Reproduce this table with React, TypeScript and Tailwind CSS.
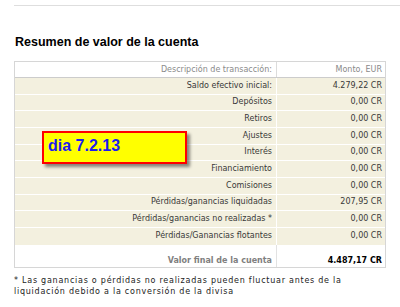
const rows: [string, string][] = [
  ["Saldo efectivo inicial:", "4.279,22 CR"],
  ["Depósitos", "0,00 CR"],
  ["Retiros", "0,00 CR"],
  ["Ajustes", "0,00 CR"],
  ["Interés", "0,00 CR"],
  ["Financiamiento", "0,00 CR"],
  ["Comisiones", "0,00 CR"],
  ["Pérdidas/ganancias liquidadas", "207,95 CR"],
  ["Pérdidas/ganancias no realizadas *", "0,00 CR"],
  ["Pérdidas/Ganancias flotantes", "0,00 CR"],
]

const App = () => {
  return (
    <div className="relative w-[400px] h-[307px] bg-white overflow-hidden">
      <div className="ml-[14px] mt-[5px] h-px bg-[#dedede]" />

      <h2 className="ml-[15px] mt-[29px] text-[12.5px] leading-[15px] font-bold text-black font-['Liberation_Sans',Arial,sans-serif]">
        Resumen de valor de la cuenta
      </h2>

      <div className="ml-[14px] mt-[11px] w-[372px] border border-[#d6d6d6] text-[8px] text-[#383838] font-['DejaVu_Sans',Verdana,sans-serif]">
        <div className="flex h-[16px] items-center border-b border-[#cccccc] text-[#8a8a8a] leading-[10px]">
          <div className="w-[261px] pr-[4px] text-right">Descripción de transacción:</div>
          <div className="flex-1 self-stretch flex items-center justify-end border-l border-[#dcdcdc] pr-[3px]">Monto, EUR</div>
        </div>

        <div className="flex flex-col divide-y divide-white bg-[#f3f0df]">
          {rows.map(([label, amount], idx) => (
            <div key={idx} className="flex h-[16.67px] items-center leading-[10px]">
              <div className="w-[261px] pr-[4px] text-right">{label}</div>
              <div className="flex-1 self-stretch flex items-center justify-end border-l border-white pr-[3px]">{amount}</div>
            </div>
          ))}
        </div>

        <div className="flex h-[22px] font-bold leading-[12px]">
          <div className="w-[261px] pr-[4px] pt-[10px] text-right text-[#808080]">Valor final de la cuenta</div>
          <div className="flex-1 border-l border-[#e2e2e2] pr-[3px] pt-[10px] text-right text-black">4.487,17 CR</div>
        </div>
      </div>

      <p className="ml-[14px] mt-[7px] text-[8px] leading-[11px] tracking-[0.75px] text-[#222] font-['DejaVu_Sans',Verdana,sans-serif]">
        * Las ganancias o pérdidas no realizadas pueden fluctuar antes de la
        <br />
        liquidación debido a la conversión de la divisa
      </p>

      <div className="absolute left-[42px] top-[131px] w-[145px] h-[33px] border-2 border-[#ff0000] bg-[#ffff00] pl-[4px] pt-[4px] shadow-[3px_3px_3px_rgba(0,0,0,0.45)]">
        <span className="block text-[16px] leading-[18px] font-bold text-[#1c1cf0] font-['Liberation_Sans',Arial,sans-serif]">dia 7.2.13</span>
      </div>
    </div>
  )
}

export default App
